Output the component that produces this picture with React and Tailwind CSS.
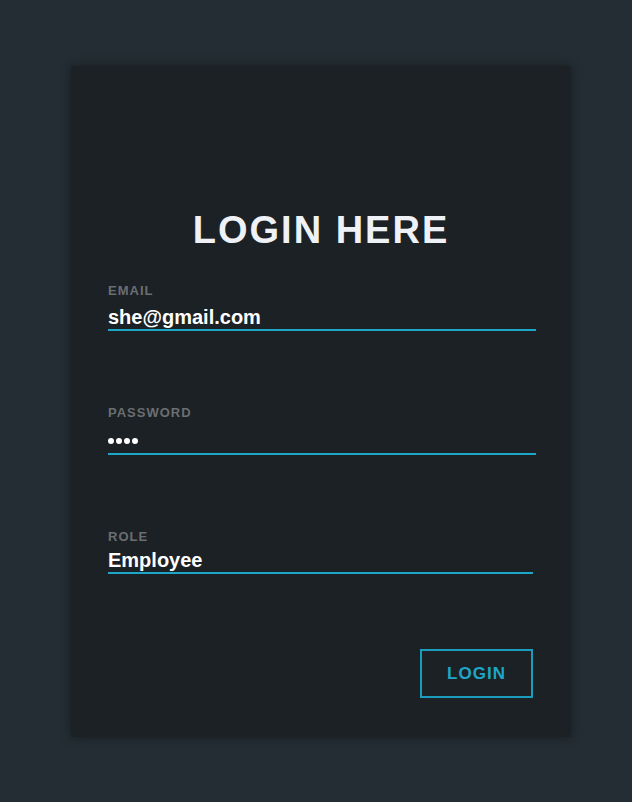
export default function App() {
  const font = { fontFamily: '"Liberation Sans", Arial, sans-serif' }

  return (
    <div className="min-h-[802px] w-full bg-[#232d33] pt-[66px]" style={font}>
      <div className="ml-[71px] flex h-[671px] w-[500px] flex-col bg-[#1c2125] px-[37px] pt-[142px] shadow-[0_0_10px_rgba(0,0,0,0.35)]">
        <h1 className="text-center text-[38px] font-bold leading-[44px] tracking-[2px] text-[#eef1f5]">LOGIN HERE</h1>

        <div className="mt-[31px]">
          <label className="block text-[13px] font-bold leading-4 tracking-[1px] text-[#6b6e71]">EMAIL</label>
          <div className="mt-[6px] w-[428px] border-b-2 border-[#1ea6c8] text-[20px] font-bold leading-6 text-white">she@gmail.com</div>
        </div>

        <div className="mt-[74px]">
          <label className="block text-[13px] font-bold leading-4 tracking-[1px] text-[#6b6e71]">PASSWORD</label>
          <div className="mt-[8px] box-content flex h-6 w-[428px] items-center gap-[2px] border-b-2 border-[#1ea6c8]">
            <span className="h-[6px] w-[6px] rounded-full bg-white" />
            <span className="h-[6px] w-[6px] rounded-full bg-white" />
            <span className="h-[6px] w-[6px] rounded-full bg-white" />
            <span className="h-[6px] w-[6px] rounded-full bg-white" />
          </div>
        </div>

        <div className="mt-[74px]">
          <label className="block text-[13px] font-bold leading-4 tracking-[1px] text-[#6b6e71]">ROLE</label>
          <div className="mt-[4px] w-[425px] border-b-2 border-[#1ea6c8] text-[20px] font-bold leading-[23px] text-white">Employee</div>
        </div>

        <div className="mt-[75px] flex w-[425px] justify-end">
          <button
            className="h-[49px] w-[113px] border-2 border-[#1a9dbd] text-[17px] font-bold tracking-[1px] text-[#1ea6c8]"
            type="button"
          >
            LOGIN
          </button>
        </div>
      </div>
    </div>
  )
}
